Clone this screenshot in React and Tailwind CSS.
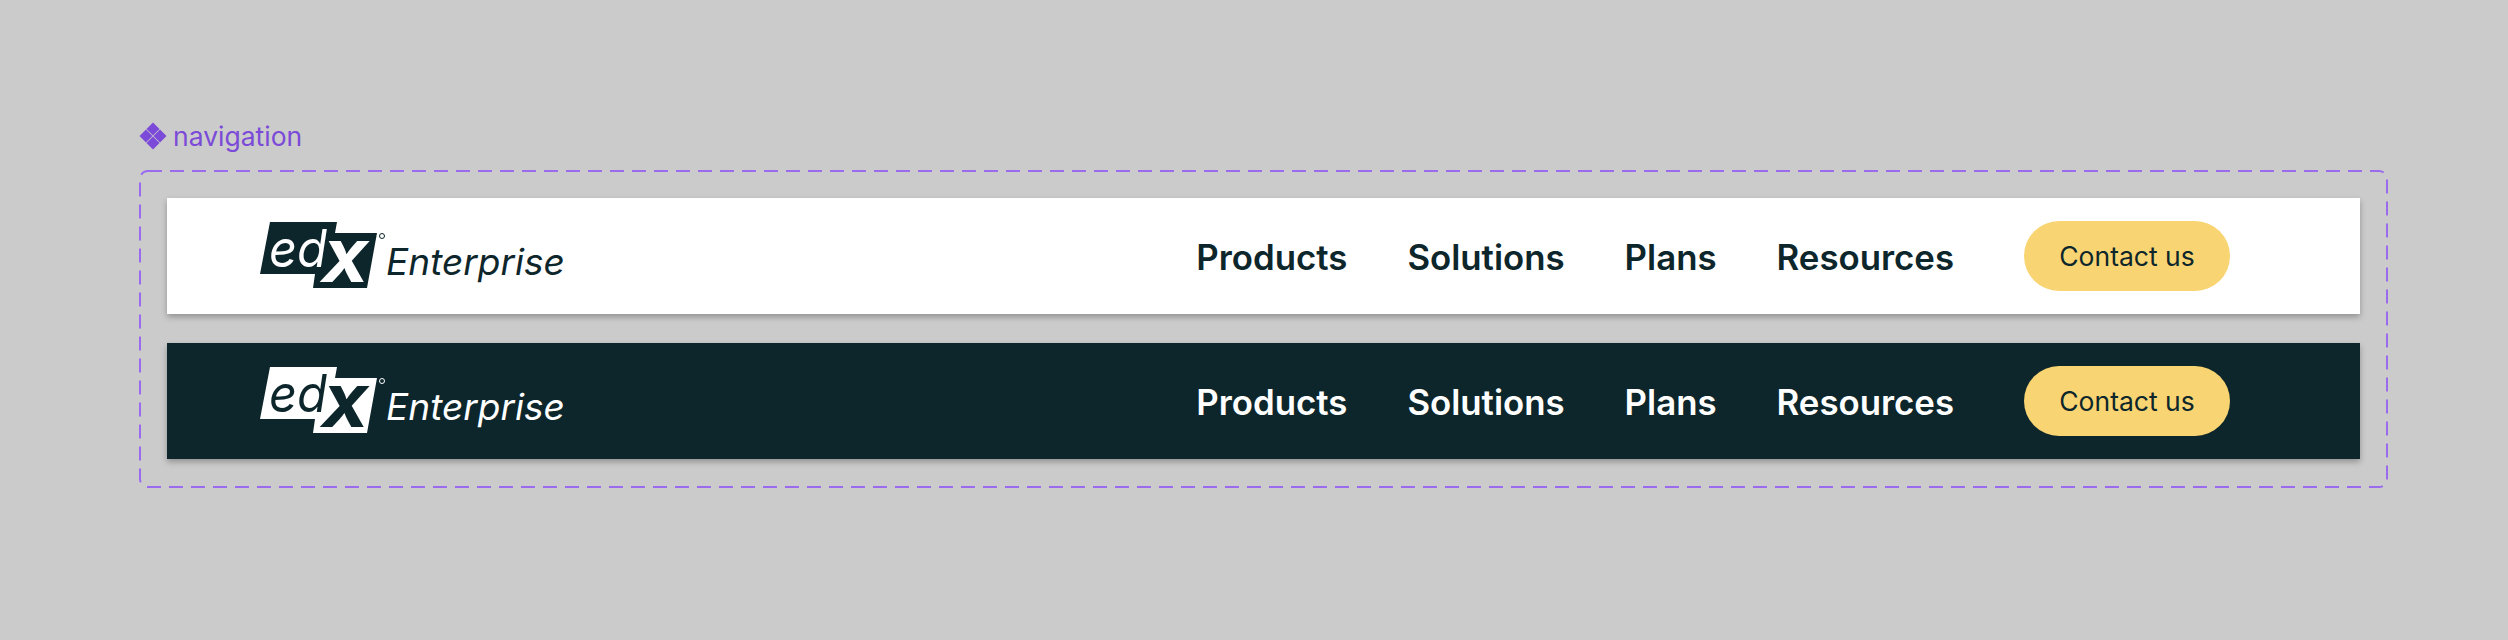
import React from 'react';

const NAV_LINKS = ['Products', 'Solutions', 'Plans', 'Resources'];

const ComponentIcon = () => (
    <svg width="28" height="28" viewBox="0 0 28 28" className="fill-[#7B4AD8]">
        <path d="M14 0.5 L20.5 7 L14 13.5 L7.5 7 Z" />
        <path d="M7 7.5 L13.5 14 L7 20.5 L0.5 14 Z" />
        <path d="M21 7.5 L27.5 14 L21 20.5 L14.5 14 Z" />
        <path d="M14 14.5 L20.5 21 L14 27.5 L7.5 21 Z" />
    </svg>
);

// fg = colour of the plate, bg = colour of the letters cut out of it
const EdxLogo = ({ fg, bg }) => (
    <svg width="126" height="68" viewBox="0 0 126 68" className="shrink-0 overflow-visible">
        <path d="M10 0 L77 0 L75 11 L117 11 L107 66 L53 66 L55 52 L0 52 Z" fill={fg} />
        <text x="9" y="45" fontFamily="Inter, sans-serif" fontStyle="italic" fontWeight="400" fontSize="52" textLength="58" lengthAdjust="spacingAndGlyphs" fill={bg}>ed</text>
        <text x="61" y="60" fontFamily="Inter, sans-serif" fontStyle="italic" fontWeight="800" fontSize="56" textLength="47" lengthAdjust="spacingAndGlyphs" fill={bg}>X</text>
        <circle cx="122" cy="14" r="2.5" fill="none" stroke={fg} strokeWidth="1" />
    </svg>
);

const NavBar = ({ dark }) => {
    const text = dark ? 'text-white' : 'text-[#0D262B]';
    return (
        <div className={`flex h-[116px] items-center justify-between pl-[93px] pr-[130px] shadow-[0_3px_6px_rgba(0,0,0,0.28)] ${dark ? 'bg-[#0D262B]' : 'bg-white'}`}>
            <div className="flex items-start">
                <EdxLogo fg={dark ? '#FFFFFF' : '#0D262B'} bg={dark ? '#0D262B' : '#FFFFFF'} />
                <span className={`mt-[16px] text-[37px] italic leading-[48px] ${text}`}>Enterprise</span>
            </div>
            <div className="flex items-center">
                <nav className={`flex items-center gap-[60px] pt-[2px] text-[34.8px] font-semibold leading-[40px] ${text}`}>
                    {NAV_LINKS.map(link => <a key={link}>{link}</a>)}
                </nav>
                <button className="ml-[70px] flex h-[70px] w-[206px] items-center justify-center rounded-full bg-[#F8D572] pt-[2px] text-[26.5px] text-[#0D262B]">
                    Contact us
                </button>
            </div>
        </div>
    );
};

export default function App() {
    return (
        <div className="h-[640px] w-[2508px] bg-[#CBCBCB] pl-[139px] pt-[121px] font-['Inter',sans-serif]">
            <div className="flex h-[30px] items-center gap-[6px] text-[26.5px] leading-[30px] text-[#7B4AD8]">
                <ComponentIcon />
                <span>navigation</span>
            </div>
            <div className="relative mt-[19px] flex h-[318px] w-[2249px] flex-col gap-[29px] p-[28px]">
                <svg className="absolute inset-0" width="2249" height="318" fill="none">
                    <rect x="1" y="1" width="2247" height="316" rx="8" stroke="#9A6BEF" strokeWidth="2" strokeDasharray="14 8" />
                </svg>
                <NavBar />
                <NavBar dark />
            </div>
        </div>
    );
}
